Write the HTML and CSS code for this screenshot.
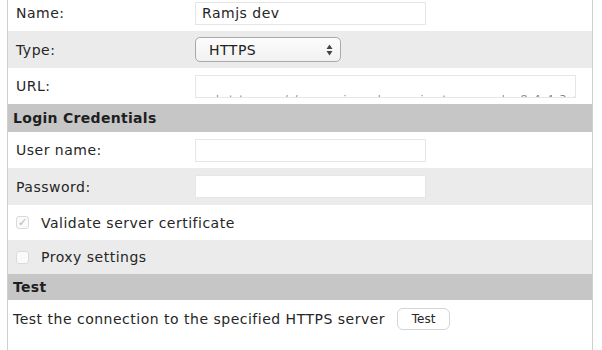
FILE: index.html
```html
<!DOCTYPE html>
<html lang="en">
<head>
    <meta charset="UTF-8">
    <title>Server Settings</title>
    <link rel="stylesheet" href="styles.css">
</head>
<body>

<div class="panel">
    <div class="row first">
        <label class="label" for="name">Name:</label>
        <input class="field" id="name" type="text" value="Ramjs dev">
    </div>
    <div class="row alt">
        <span class="label">Type:</span>
        <div class="select">
            <span>HTTPS</span>
            <svg class="arrows" width="7" height="12" viewBox="0 0 7 12">
                <path d="M3.5 0.5 L6.5 5 L0.5 5 Z M0.5 7 L6.5 7 L3.5 11.5 Z" fill="#444"/>
            </svg>
        </div>
    </div>
    <div class="row">
        <span class="label">URL:</span>
        <div class="field url"><span>https://ramjs.dev.internal:8443/jira/rest/api</span></div>
    </div>

    <div class="section">Login Credentials</div>
    <div class="row">
        <label class="label" for="user">User name:</label>
        <input class="field" id="user" type="text">
    </div>
    <div class="row alt">
        <label class="label" for="pass">Password:</label>
        <input class="field" id="pass" type="password">
    </div>
    <div class="row check">
        <span class="box checked">&#10003;</span>
        <span>Validate server certificate</span>
    </div>
    <div class="row check alt">
        <span class="box"></span>
        <span>Proxy settings</span>
    </div>

    <div class="section small">Test</div>
    <div class="test-row">
        <span>Test the connection to the specified HTTPS server</span>
        <button class="button">Test</button>
    </div>
</div>

</body>
</html>
```

FILE: styles.css
```css
body {
    margin: 0;
    font-family: "DejaVu Sans", Verdana, sans-serif;
    font-size: 14px;
    letter-spacing: 0.5px;
    color: #262626;
    background-color: white;
    overflow: hidden;
}
.panel {
    margin-left: 7px;
    width: 584px;
    height: 360px;
    margin-top: -5px;
    border-left: 1px solid #cfcfcf;
    border-right: 1px solid #cfcfcf;
}
.row {
    display: flex;
    align-items: center;
    height: 36px;
    padding-left: 8px;
}
.row.alt {
    background-color: #ebebeb;
    height: 37px;
}
.label {
    width: 179px;
}
.field {
    box-sizing: border-box;
    width: 231px;
    height: 23px;
    border: 1px solid #e6e6e6;
    background-color: white;
    font-family: inherit;
    font-size: 14px;
    letter-spacing: 0.5px;
    color: #262626;
    padding: 0 6px;
    outline: none;
}
.url {
    width: 381px;
    overflow: hidden;
    color: #888;
}
.url span {
    display: block;
    padding-top: 17px;
    padding-left: 14px;
    font-size: 11px;
    letter-spacing: 6px;
    white-space: nowrap;
}
.select {
    box-sizing: border-box;
    width: 146px;
    height: 25px;
    border: 1px solid #a9a9a9;
    border-radius: 5px;
    background: linear-gradient(#fdfdfd, #f1f1f1);
    display: flex;
    align-items: center;
    justify-content: space-between;
    padding: 0 7px 0 13px;
    color: #222;
}
.section {
    background-color: #c6c6c6;
    height: 28px;
    line-height: 28px;
    padding-left: 5px;
    font-weight: bold;
    letter-spacing: 0.3px;
    color: #1e1e1e;
}
.section.small {
    height: 26px;
    line-height: 26px;
}
.check {
    height: 35px;
}
.check.alt {
    height: 34px;
}
.box {
    box-sizing: border-box;
    width: 13px;
    height: 13px;
    border: 1px solid #dadada;
    border-radius: 3px;
    margin-right: 12px;
    font-size: 11px;
    line-height: 11px;
    letter-spacing: 0;
    text-align: center;
    color: #b5b5b5;
    background-color: #fafafa;
}
.test-row {
    display: flex;
    align-items: center;
    height: 38px;
    padding-left: 5px;
}
.button {
    margin-left: 12px;
    width: 53px;
    height: 22px;
    border: 1px solid #d5d5d5;
    border-radius: 6px;
    background-color: white;
    font-family: inherit;
    font-size: 12px;
    color: #262626;
    padding: 0;
}
```
